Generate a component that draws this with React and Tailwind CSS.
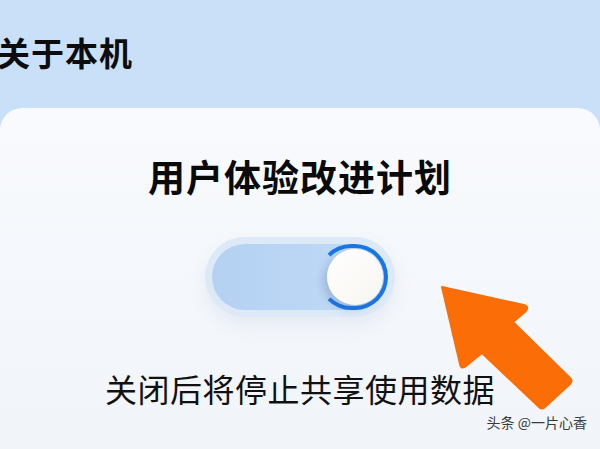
import React from 'react';

const Arrow = () => (
    <svg className="absolute left-0 top-0" width="600" height="449" viewBox="0 0 600 449">
        <path
            d="M442 287 L524 305 Q530 307 525 312 L513 322 L570 378 Q573 381 570 384 L545 407 Q542 410 539 407 L482 353 L466 366 Q461 370 460 364 Z"
            fill="#fb6d06"
            stroke="#fb6d06"
            strokeWidth="2"
            strokeLinejoin="round"
        />
    </svg>
);

const Toggle = () => (
    <div className="w-[190px] h-[80px] rounded-full bg-[#dde9f7] flex items-center justify-center shadow-[0_8px_18px_rgba(120,150,190,0.12)]">
        <div className="relative w-[176px] h-[66px] rounded-full bg-gradient-to-r from-[#b4d1f3] to-[#c2dbf6]">
            <div className="absolute right-0 top-0 w-[70px] h-[66px] rounded-full border-[4px] border-[#1877e6] border-l-transparent" />
            <div className="absolute right-[5px] top-[5px] w-[56px] h-[56px] rounded-full bg-gradient-to-br from-[#ffffff] to-[#f7f5ef] shadow-[-4px_4px_8px_rgba(60,90,140,0.25)]" />
        </div>
    </div>
);

const App = () => {
    return (
        <div
            className="relative w-[600px] h-[449px] overflow-hidden flex flex-col bg-gradient-to-b from-[#c9e0f8] to-[#c6def7]"
            style={{ fontFamily: '"Noto Sans CJK SC", "Noto Sans", sans-serif' }}
        >
            <div className="h-[108px] shrink-0 pt-[30px] ml-[-3px]">
                <h1 className="text-[33px] leading-[44px] font-semibold text-[#0d0d0d] tracking-[1px]">关于本机</h1>
            </div>

            <div className="flex-1 rounded-t-[22px] bg-gradient-to-b from-[#f8fafd] to-[#f1f5fa] flex flex-col items-center">
                <h2 className="mt-[44px] text-[37px] leading-[48px] font-semibold text-[#0a0a0a] tracking-[1px]">用户体验改进计划</h2>
                <div className="mt-[37px]">
                    <Toggle />
                </div>
                <p className="mt-[50px] text-[32px] leading-[42px] text-[#111] tracking-[0.5px]">关闭后将停止共享使用数据</p>
                <div className="self-end mr-[13px] mt-[4px] text-[14px] leading-[18px] text-[#3a3a3a]">头条 @一片心香</div>
            </div>

            <Arrow />
        </div>
    );
};

export default App;
